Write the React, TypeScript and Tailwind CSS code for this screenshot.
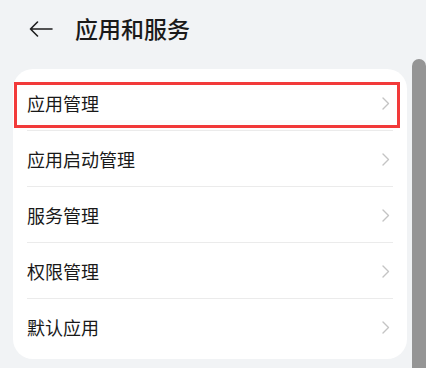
import React from 'react';

const items = ['应用管理', '应用启动管理', '服务管理', '权限管理', '默认应用'];

function Chevron() {
  return (
    <svg width="8" height="13" viewBox="0 0 8 13" fill="none">
      <path d="M1 1 L6.5 6.5 L1 12" stroke="#c4c4c4" strokeWidth="1.4" strokeLinecap="round" strokeLinejoin="round" />
    </svg>
  );
}

export default function App() {
  return (
    <div
      className="w-[426px] h-[368px] overflow-hidden bg-[#f1f3f5] flex flex-col"
      style={{ fontFamily: '"Noto Sans CJK SC", "Noto Sans", sans-serif' }}
    >
      {/* header */}
      <div className="h-[58px] flex items-center pl-[29px] pb-[2px]">
        <svg width="24" height="16" viewBox="0 0 24 16" fill="none" className="mt-[2px]">
          <path d="M23 8 H1.5 M8.5 1 L1.5 8 L8.5 15" stroke="#1e1e1e" strokeWidth="1.6" strokeLinecap="round" strokeLinejoin="round" />
        </svg>
        <span className="ml-[22px] text-[23px] font-medium text-[#1a1a1a] leading-none">应用和服务</span>
      </div>

      <div className="flex flex-1 min-h-0">
        <div className="ml-[13px] mt-[11px] w-[394px] h-[290px] bg-white rounded-[20px] pt-[6px] pb-[4px] relative">
          {items.map((label, i) => (
            <div key={label} className="relative h-[56px] flex items-center pl-[14px] pr-[17px]">
              <span className="flex-1 text-[18px] text-[#191919] leading-none">{label}</span>
              <Chevron />
              {i < items.length - 1 && (
                <div className="absolute left-[14px] right-[14px] bottom-0 h-px bg-[#ebebeb]" />
              )}
            </div>
          ))}
          {/* highlight box */}
          <div className="absolute left-[1px] top-[13px] w-[386px] h-[46px] border-[3px] border-[#f23a3a]" />
        </div>
        <div className="ml-[5px] mt-[1px] w-[4px] flex-1 rounded-t-full bg-[#959595]" />
      </div>
    </div>
  );
}
